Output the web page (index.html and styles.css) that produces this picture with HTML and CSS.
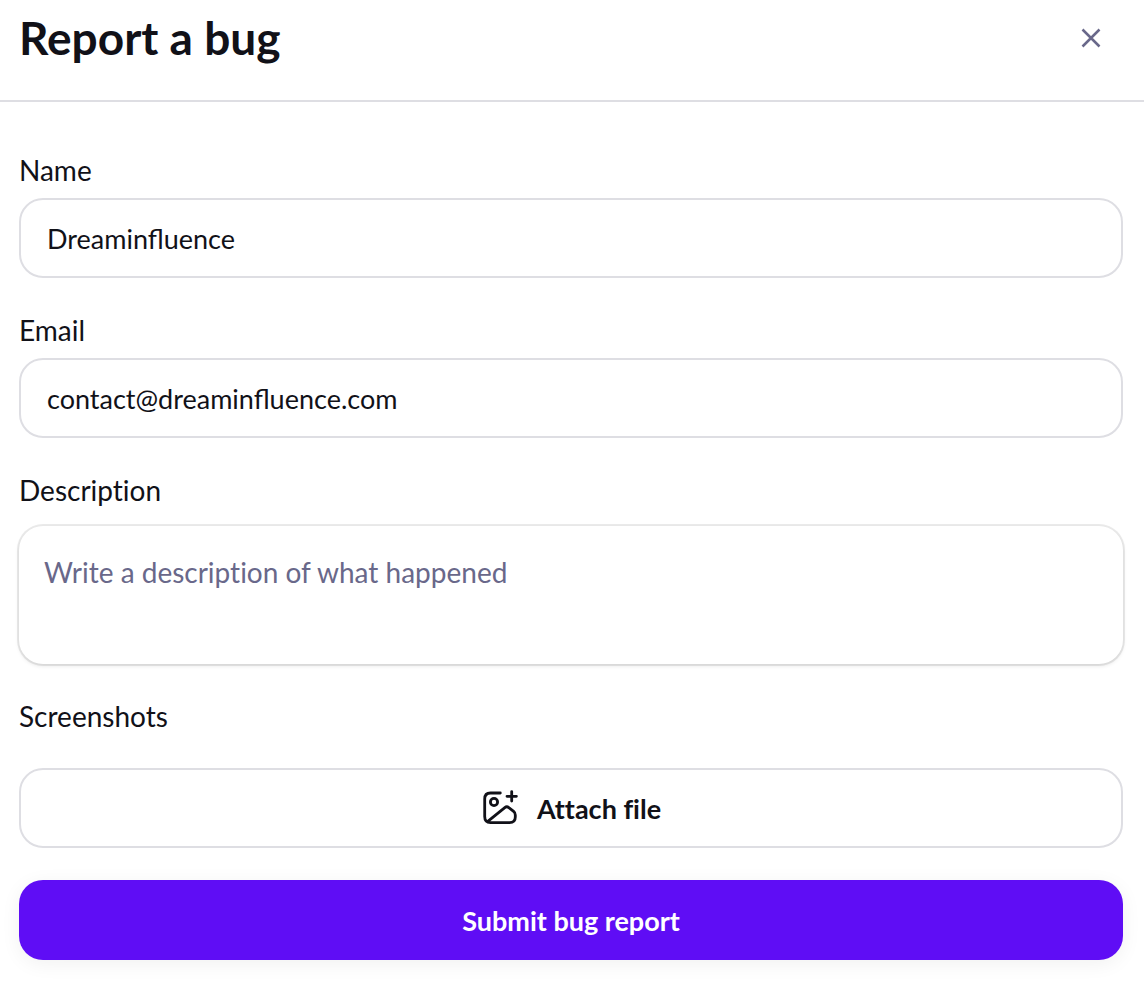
FILE: index.html
```html
<!DOCTYPE html>
<html lang="en">
<head>
    <meta charset="UTF-8">
    <meta name="viewport" content="width=device-width, initial-scale=1.0">
    <title>Report a bug</title>
    <link rel="stylesheet" href="styles.css">
</head>
<body>
    <header>
        <h1>Report a bug</h1>
        <button type="button" class="close-btn" aria-label="Close">
            <svg viewBox="0 0 24 24">
                <path d="M3.5 3.5l17 17M20.5 3.5l-17 17"/>
            </svg>
        </button>
    </header>

    <form class="bug-form">
        <div class="field">
            <label for="name">Name</label>
            <input type="text" id="name" value="Dreaminfluence">
        </div>

        <div class="field">
            <label for="email">Email</label>
            <input type="email" id="email" value="contact@dreaminfluence.com">
        </div>

        <div class="field field-description">
            <label for="description">Description</label>
            <textarea id="description" placeholder="Write a description of what happened"></textarea>
        </div>

        <div class="field field-screenshots">
            <span class="label" id="screenshots-label">Screenshots</span>
            <button type="button" class="attach-btn" aria-describedby="screenshots-label">
                <svg viewBox="0 0 40 40">
                    <path d="M19.3 5H9.5Q3.7 5 3.7 11V28.6Q3.7 34.6 9.5 34.6H28.5Q34.3 34.6 34.3 29V27Q34.3 24.8 32.6 23.4L27.8 19.6Q25.8 18 23.8 19.6L6.5 33.6"/>
                    <circle cx="13" cy="14" r="3.6"/>
                    <path d="M30.7 3.6v9.4M26 8.3h9.4"/>
                </svg>
                Attach file
            </button>
        </div>

        <button type="submit" class="submit-btn">Submit bug report</button>
    </form>
</body>
</html>
```

FILE: styles.css
```css
* {
    box-sizing: border-box;
}
body {
    margin: 0;
    font-family: Lato, "Liberation Sans", sans-serif;
    background-color: white;
    color: #111118;
}
header {
    display: flex;
    justify-content: space-between;
    align-items: center;
    padding: 8px 41px 32px 19px;
    border-bottom: 2px solid #dedee3;
}
h1 {
    margin: 0;
    font-size: 46px;
    line-height: 60px;
    font-weight: 700;
}
button,
input,
textarea {
    font-family: inherit;
    color: inherit;
}
button {
    cursor: pointer;
}
label,
button,
textarea {
    font-variant-ligatures: none;
}
.close-btn {
    display: flex;
    padding: 0;
    border: none;
    background: none;
    color: #69688a;
}
.close-btn svg {
    width: 24px;
    height: 24px;
    fill: none;
    stroke: currentColor;
    stroke-width: 2.5;
}
.bug-form {
    display: flex;
    flex-direction: column;
    gap: 36px;
    padding: 52px 21px 22px 19px;
}
.field {
    display: flex;
    flex-direction: column;
    gap: 12px;
}
.field-description {
    gap: 20px;
}
.field-screenshots {
    gap: 36px;
}
label,
.label {
    font-size: 28px;
    line-height: 32px;
}
input {
    width: 100%;
    height: 80px;
    padding: 0 26px;
    border: 2px solid #dedee3;
    border-radius: 24px;
    background: white;
    font-size: 27px;
    outline: none;
}
textarea {
    display: block;
    width: 100%;
    height: 138px;
    padding: 30px 25px;
    border: none;
    border-radius: 24px;
    box-shadow: 0 0 0 2px rgba(0, 0, 0, 0.08), 0 2px 4px rgba(0, 0, 0, 0.1);
    background: white;
    font-size: 28px;
    line-height: 32px;
    resize: none;
    outline: none;
}
textarea::placeholder {
    color: #69688a;
    opacity: 1;
}
.attach-btn,
.submit-btn {
    display: flex;
    justify-content: center;
    align-items: center;
    gap: 16px;
    height: 80px;
    border-radius: 24px;
    font-size: 27px;
    font-weight: 700;
}
.attach-btn {
    border: 2px solid #dedee3;
    background: white;
}
.attach-btn svg {
    width: 40px;
    height: 40px;
    fill: none;
    stroke: currentColor;
    stroke-width: 2.8;
    stroke-linecap: round;
    stroke-linejoin: round;
}
.submit-btn {
    margin-top: -4px;
    border: none;
    background: #5f0df5;
    color: white;
    box-shadow: 0 4px 20px rgba(0, 0, 0, 0.06);
}
```
